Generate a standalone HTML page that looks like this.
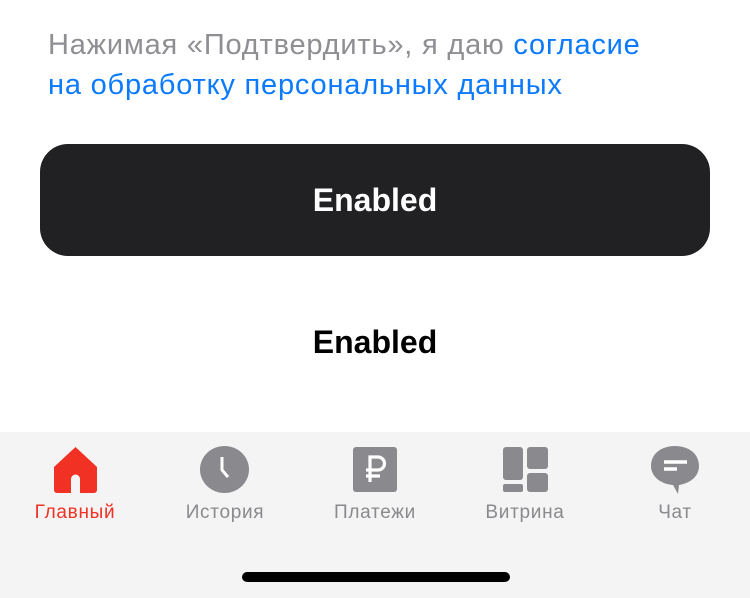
<!DOCTYPE html>
<html><head><meta charset="utf-8"><style>
body{margin:0;width:750px;height:598px;background:#fff;font-family:"Liberation Sans",sans-serif;position:relative;overflow:hidden}
.t{position:absolute;left:48px;top:25px;font-size:29px;letter-spacing:0.8px;line-height:40px;color:#8e8e93;width:700px;white-space:nowrap}
.t span{color:#0a7aff}
.btn{position:absolute;left:40px;top:144px;width:670px;height:112px;border-radius:28px;background:#212123;color:#fff;font-size:32px;font-weight:bold;text-align:center;line-height:112px}
.b2{position:absolute;left:0;width:750px;top:324px;text-align:center;font-size:32px;font-weight:bold;color:#000}
.bar{position:absolute;left:0;top:432px;width:750px;height:166px;background:#f4f4f4}
.lab{position:absolute;top:502px;font-size:19px;letter-spacing:0.7px;color:#8a8a8e;width:150px;text-align:center}
.ind{position:absolute;left:242px;top:572px;width:268px;height:10px;border-radius:5px;background:#000}
svg{position:absolute}
</style></head><body>
<div class="t">Нажимая «Подтвердить», я даю <span>согласие<br>на обработку персональных данных</span></div>
<div class="btn">Enabled</div>
<div class="b2">Enabled</div>
<div class="bar">
<svg style="left:53px;top:13px" width="45" height="48" viewBox="0 0 45 48"><path d="M22.5 2 L44 22 V45 a3 3 0 0 1 -3 3 H27 V34 a4.5 4.5 0 0 0 -9 0 V48 H4 a3 3 0 0 1 -3 -3 V22 Z" fill="#f03124"/></svg>
<svg style="left:200px;top:14px" width="49" height="47" viewBox="0 0 49 47"><ellipse cx="24.5" cy="23.5" rx="24.5" ry="23.5" fill="#8a8a8e"/><path d="M22 11 V24 L28 31" stroke="#fff" stroke-width="3" fill="none"/></svg>
<svg style="left:353px;top:15px" width="44" height="45" viewBox="0 0 44 45"><rect width="44" height="45" rx="3" fill="#8a8a8e"/><path d="M17 35 V10 H25 a6.5 6.5 0 0 1 0 13 H13 M13 29 H27" stroke="#fff" stroke-width="3.2" fill="none"/></svg>
<svg style="left:503px;top:15px" width="45" height="45" viewBox="0 0 45 45"><rect width="20" height="33" rx="3" fill="#8a8a8e"/><rect x="24" width="21" height="22" rx="3" fill="#8a8a8e"/><rect y="37" width="20" height="8" rx="2" fill="#8a8a8e"/><rect x="24" y="26" width="21" height="19" rx="3" fill="#8a8a8e"/></svg>
<svg style="left:651px;top:14px" width="48" height="48" viewBox="0 0 48 48"><path d="M24 0 C38 0 48 8 48 20 C48 30 40 37 28 39 L27 48 L22 39 C9 38 0 30 0 20 C0 8 10 0 24 0Z" fill="#8a8a8e"/><path d="M13 16 H36 M13 23 H26" stroke="#fff" stroke-width="3.5"/></svg>
</div>
<div class="lab" style="left:0;color:#f03124">Главный</div>
<div class="lab" style="left:150px">История</div>
<div class="lab" style="left:300px">Платежи</div>
<div class="lab" style="left:450px">Витрина</div>
<div class="lab" style="left:600px">Чат</div>
<div class="ind"></div>
</body></html>
